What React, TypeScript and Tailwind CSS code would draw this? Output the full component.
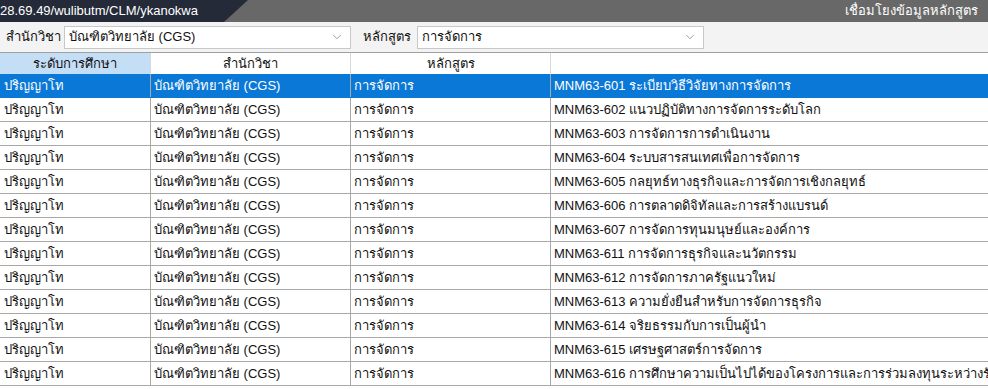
import { ChevronDown } from "lucide-react";

const font = { fontFamily: '"Liberation Sans", Tahoma, "Noto Sans", sans-serif' };

const courses = [
  "MNM63-601 ระเบียบวิธีวิจัยทางการจัดการ",
  "MNM63-602 แนวปฏิบัติทางการจัดการระดับโลก",
  "MNM63-603 การจัดการการดำเนินงาน",
  "MNM63-604 ระบบสารสนเทศเพื่อการจัดการ",
  "MNM63-605 กลยุทธ์ทางธุรกิจและการจัดการเชิงกลยุทธ์",
  "MNM63-606 การตลาดดิจิทัลและการสร้างแบรนด์",
  "MNM63-607 การจัดการทุนมนุษย์และองค์การ",
  "MNM63-611 การจัดการธุรกิจและนวัตกรรม",
  "MNM63-612 การจัดการภาครัฐแนวใหม่",
  "MNM63-613 ความยั่งยืนสำหรับการจัดการธุรกิจ",
  "MNM63-614 จริยธรรมกับการเป็นผู้นำ",
  "MNM63-615 เศรษฐศาสตร์การจัดการ",
  "MNM63-616 การศึกษาความเป็นไปได้ของโครงการและการร่วมลงทุนระหว่างรัฐและ",
];

function Select({ value }: { value: string }) {
  return (
    <div className="flex h-[23px] w-[287px] items-center justify-between border border-[#c8c8c8] bg-white pl-[4px] pr-[6px]">
      <span className="text-[13px] text-[#111]">{value}</span>
      <ChevronDown className="h-[14px] w-[14px] text-[#777]" strokeWidth={1.2} />
    </div>
  );
}

export default function App() {
  return (
    <div className="h-[389px] w-[988px] overflow-hidden bg-white" style={font}>
      {/* title bar */}
      <div className="relative flex h-[22px] items-center justify-between overflow-hidden bg-[#686868]">
        <div
          className="absolute inset-y-0 left-0 w-[248px] bg-[#252a39]"
          style={{ clipPath: "polygon(0 0, 248px 0, 224px 100%, 0 100%)" }}
        />
        <span className="relative text-[13px] text-white">28.69.49/wulibutm/CLM/ykanokwa</span>
        <span className="relative mr-[10px] text-[13px] text-white">เชื่อมโยงข้อมูลหลักสูตร</span>
      </div>

      {/* filter bar */}
      <div className="flex h-[31px] items-center border-b border-[#a0a0a0] bg-[#f3f3f3] pl-[6px]">
        <span className="w-[58px] whitespace-nowrap text-[13px] text-[#111]">สำนักวิชา</span>
        <Select value="บัณฑิตวิทยาลัย (CGS)" />
        <span className="ml-[12px] w-[54px] whitespace-nowrap text-[13px] text-[#111]">หลักสูตร</span>
        <Select value="การจัดการ" />
      </div>

      {/* header */}
      <div className="grid h-[21px] grid-cols-[150px_200px_200px_1fr] text-[13px] text-[#111]">
        <div className="flex items-center justify-center bg-[#c4def6]">ระดับการศึกษา</div>
        <div className="flex items-center justify-center border-l border-[#d8d8d8]">สำนักวิชา</div>
        <div className="flex items-center justify-center border-l border-[#d8d8d8]">หลักสูตร</div>
        <div className="border-l border-[#d8d8d8]" />
      </div>

      {/* rows */}
      {courses.map((c, i) => {
        const sel = i === 0;
        return (
          <div
            key={c}
            className={`grid h-[24px] grid-cols-[150px_200px_200px_1fr] border-b text-[13px] ${
              sel ? "border-[#0a78d7] bg-[#0a78d7] text-white" : "border-[#a8a8a8] text-[#111]"
            }`}
          >
            <div className="flex items-center whitespace-nowrap pl-[4px]">ปริญญาโท</div>
            <div className="flex items-center whitespace-nowrap border-l border-[#a8a8a8] pl-[3px]">
              บัณฑิตวิทยาลัย (CGS)
            </div>
            <div className="flex items-center whitespace-nowrap border-l border-[#a8a8a8] pl-[3px]">การจัดการ</div>
            <div className="flex items-center overflow-hidden whitespace-nowrap border-l border-[#a8a8a8] pl-[3px]">
              {c}
            </div>
          </div>
        );
      })}
    </div>
  );
}
